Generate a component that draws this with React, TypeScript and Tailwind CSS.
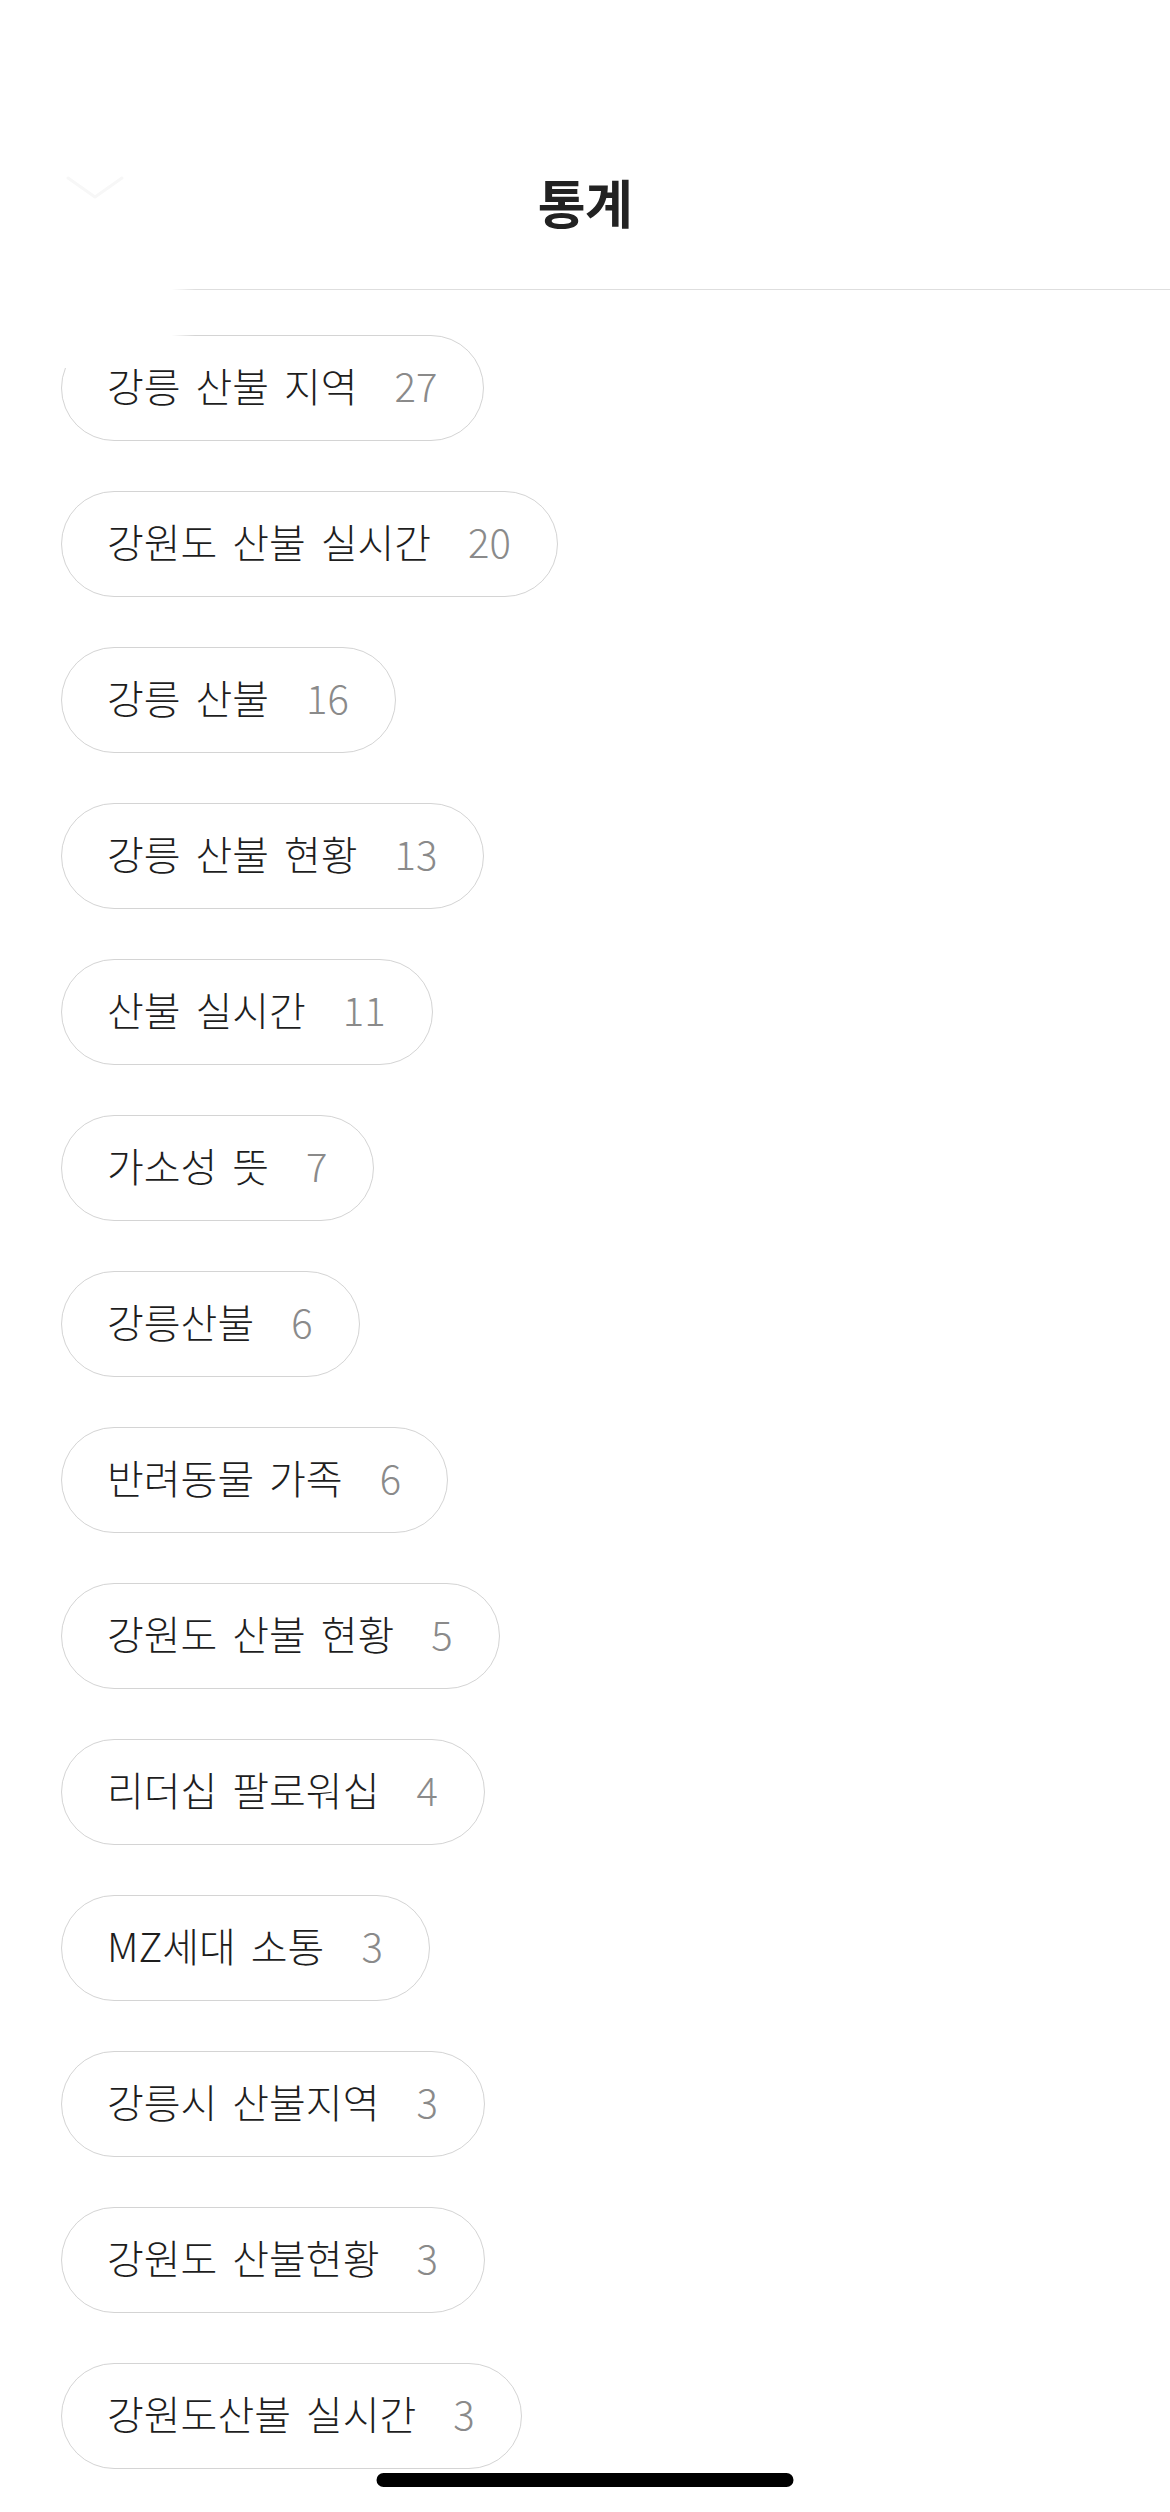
const keywords: { label: string; count: number }[] = [
  { label: "강릉 산불 지역", count: 27 },
  { label: "강원도 산불 실시간", count: 20 },
  { label: "강릉 산불", count: 16 },
  { label: "강릉 산불 현황", count: 13 },
  { label: "산불 실시간", count: 11 },
  { label: "가소성 뜻", count: 7 },
  { label: "강릉산불", count: 6 },
  { label: "반려동물 가족", count: 6 },
  { label: "강원도 산불 현황", count: 5 },
  { label: "리더십 팔로워십", count: 4 },
  { label: "MZ세대 소통", count: 3 },
  { label: "강릉시 산불지역", count: 3 },
  { label: "강원도 산불현황", count: 3 },
  { label: "강원도산불 실시간", count: 3 },
];

function KeywordPill({ label, count }: { label: string; count: number }) {
  return (
    <div className="flex h-[106px] items-center gap-[37px] rounded-full border-[1.5px] border-[#d4d4d4] bg-white pr-[46px] pb-[7px] pl-[45px]">
      <span className="text-[40px] leading-none font-light [word-spacing:6px] text-[#1e1e1e]">
        {label}
      </span>
      <span className="text-[40px] leading-none font-light text-[#8a8a8a]">
        {count}
      </span>
    </div>
  );
}

export default function App() {
  return (
    <div
      className="relative min-h-[2512px] w-full overflow-hidden bg-white"
      style={{ fontFamily: '"Noto Sans CJK KR", "Noto Sans", sans-serif' }}
    >
      <header className="border-b-[1.5px] border-[#dedede] pt-[172px] pb-[57px] text-center">
        <h1 className="text-[52px] leading-[60px] font-semibold tracking-[-0.01em] text-[#222222]">
          통계
        </h1>
      </header>

      <div className="flex flex-col items-start gap-[50px] pt-[45px] pl-[61px]">
        {keywords.map((k) => (
          <KeywordPill key={k.label} label={k.label} count={k.count} />
        ))}
      </div>

      {/* faded back button area */}
      <div className="absolute top-0 left-0 h-[368px] w-[195px] bg-gradient-to-r from-white from-[88%] to-transparent">
        <svg
          width="58"
          height="23"
          viewBox="0 0 58 23"
          fill="none"
          className="absolute top-[176px] left-[66px]"
        >
          <polyline
            points="2,2 29,21 56,2"
            stroke="#f7f7f7"
            strokeWidth="3"
            strokeLinecap="round"
            strokeLinejoin="round"
          />
        </svg>
      </div>

      <div className="absolute bottom-[25px] left-1/2 h-[14px] w-[417px] -translate-x-1/2 rounded-full bg-black" />
    </div>
  );
}
